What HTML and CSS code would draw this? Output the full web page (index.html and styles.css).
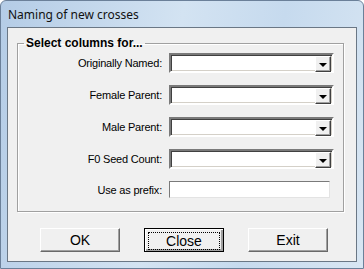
FILE: index.html
```html
<!DOCTYPE html>
<html lang="en">
<head>
    <meta charset="UTF-8">
    <title>Naming of new crosses</title>
    <link rel="stylesheet" href="styles.css">
</head>
<body>
    <div class="window">
        <div class="titlebar">Naming of new crosses</div>
        <div class="client">
            <fieldset class="group">
                <legend>Select columns for...</legend>
                <div class="row">
                    <label>Originally Named:</label>
                    <div class="combo"><span class="arrow"></span></div>
                </div>
                <div class="row">
                    <label>Female Parent:</label>
                    <div class="combo"><span class="arrow"></span></div>
                </div>
                <div class="row">
                    <label>Male Parent:</label>
                    <div class="combo"><span class="arrow"></span></div>
                </div>
                <div class="row">
                    <label>F0 Seed Count:</label>
                    <div class="combo"><span class="arrow"></span></div>
                </div>
                <div class="row prefix">
                    <label>Use as prefix:</label>
                    <div class="textbox"></div>
                </div>
            </fieldset>
            <div class="buttons">
                <button>OK</button>
                <button class="default"><span>Close</span></button>
                <button>Exit</button>
            </div>
        </div>
    </div>
</body>
</html>
```

FILE: styles.css
```css
body {
    margin: 0;
    font-family: "Liberation Sans", Arial, sans-serif;
}
.window {
    width: 364px;
    height: 269px;
    box-sizing: border-box;
    border: 1px solid #6b8099;
    border-radius: 6px 6px 0 0;
    padding: 0 6px 6px;
    background: linear-gradient(100deg, #b4cce6 0%, #d3e3f2 45%, #c6daee 70%, #d8e6f3 100%);
}
.titlebar {
    height: 26px;
    box-sizing: border-box;
    padding: 5px 0 0 1px;
    font-family: "Noto Sans", sans-serif;
    font-size: 12px;
    color: #111;
}
.client {
    width: 350px;
    height: 235px;
    box-sizing: border-box;
    border: 1px solid #6a7785;
    background: #f0f0f0;
    overflow: hidden;
}
.group {
    width: 327px;
    box-sizing: border-box;
    margin: 7px 0 0 9px;
    padding: 2px 9px 12px 0;
    border: 1px solid #a0a0a0;
    box-shadow: inset 1px 1px 0 #fff, 1px 1px 0 #fff;
    height: 177px;
}
.group legend {
    margin-left: 6px;
    padding: 0 2px;
    font-size: 12px;
    font-weight: bold;
    line-height: 16px;
}
.row {
    display: flex;
    align-items: center;
    justify-content: flex-end;
    height: 20px;
    margin-bottom: 12px;
}
.row.prefix {
    height: 17px;
}
.row label {
    font-size: 11px;
    letter-spacing: -0.2px;
    margin-right: 7px;
}
.combo {
    width: 165px;
    height: 20px;
    box-sizing: border-box;
    background: #fff;
    border: 2px solid;
    border-color: #7a7a7a #fff #fff #7a7a7a;
    box-shadow: inset 1px 1px 0 #404040, inset -1px -1px 0 #d4d0c8;
    display: flex;
    justify-content: flex-end;
    padding: 1px;
}
.arrow {
    width: 16px;
    height: 16px;
    box-sizing: border-box;
    background: #f0f0f0;
    border: 1px solid;
    border-color: #fff #404040 #404040 #fff;
    box-shadow: inset -1px -1px 0 #a0a0a0;
    display: flex;
    align-items: center;
    justify-content: center;
}
.arrow::after {
    content: "";
    border-left: 4px solid transparent;
    border-right: 4px solid transparent;
    border-top: 4px solid #000;
    margin-top: 1px;
}
.textbox {
    width: 161px;
    height: 17px;
    margin-right: 4px;
    box-sizing: border-box;
    background: #fff;
    border: 1px solid;
    border-color: #7a7a7a #e3e3e3 #e3e3e3 #7a7a7a;
}
.buttons {
    display: flex;
    gap: 24px;
    margin: 16px 0 0 32px;
}
button {
    width: 80px;
    height: 24px;
    padding: 0;
    font-family: "Liberation Sans", Arial, sans-serif;
    font-size: 14px;
    color: #000;
    background: #f0f0f0;
    border: 1px solid;
    border-color: #fff #696969 #696969 #fff;
    box-shadow: inset -1px -1px 0 #a0a0a0;
}
button.default {
    border: 1px solid #000;
    box-shadow: inset 1px 1px 0 #fff, inset -2px -2px 0 #a0a0a0;
}
button.default span {
    display: block;
    margin: 3px;
    height: 16px;
    line-height: 16px;
    border: 1px dotted #000;
}
```
